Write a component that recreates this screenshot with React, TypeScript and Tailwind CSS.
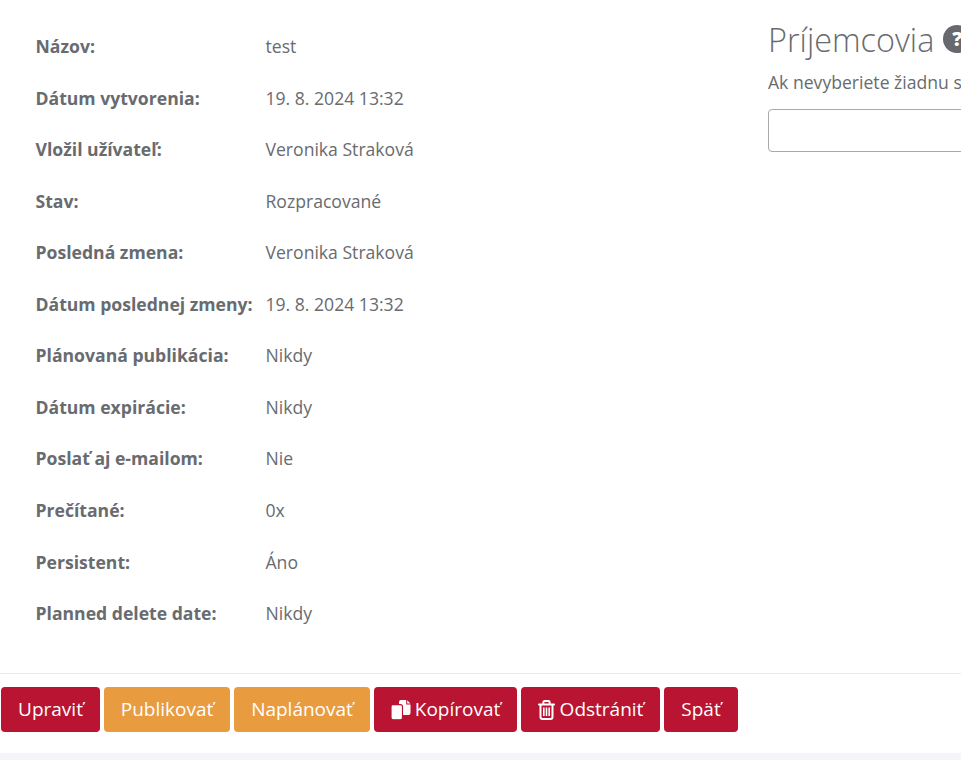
import React from "react";

const rows: [string, string][] = [
  ["Názov:", "test"],
  ["Dátum vytvorenia:", "19. 8. 2024 13:32"],
  ["Vložil užívateľ:", "Veronika Straková"],
  ["Stav:", "Rozpracované"],
  ["Posledná zmena:", "Veronika Straková"],
  ["Dátum poslednej zmeny:", "19. 8. 2024 13:32"],
  ["Plánovaná publikácia:", "Nikdy"],
  ["Dátum expirácie:", "Nikdy"],
  ["Poslať aj e-mailom:", "Nie"],
  ["Prečítané:", "0x"],
  ["Persistent:", "Áno"],
  ["Planned delete date:", "Nikdy"],
];

function CopyIcon() {
  return (
    <svg viewBox="0 0 20 20" className="w-[20px] h-[20px] mr-[4px] shrink-0">
      <path fill="#fff" d="M10 0h5.2v4.6h4.3V13a2 2 0 0 1-2 2H10a2 2 0 0 1-2-2V2a2 2 0 0 1 2-2z" />
      <path fill="#fff" d="M16.2 0.3l3.2 3.3h-3.2V0.3z" />
      <path fill="#fff" stroke="#b91431" strokeWidth="1.2" d="M2 4.6h7.5a2 2 0 0 1 2 2V17.8a2 2 0 0 1-2 2H2a2 2 0 0 1-2-2V6.6a2 2 0 0 1 2-2z" />
    </svg>
  );
}

function TrashIcon() {
  return (
    <svg viewBox="0 0 17 20" className="w-[17px] h-[20px] mr-[5px] shrink-0" fill="none" stroke="#fff">
      <path strokeWidth="2" strokeLinecap="round" d="M1 4.4h15" />
      <path strokeWidth="2" d="M5.3 4V2.4A1.4 1.4 0 0 1 6.7 1h3.6a1.4 1.4 0 0 1 1.4 1.4V4" />
      <path strokeWidth="2" d="M2.5 4.4V17A2 2 0 0 0 4.5 19h8a2 2 0 0 0 2-2V4.4" />
      <path strokeWidth="1.6" d="M5.8 7.5v8.5M8.5 7.5v8.5M11.2 7.5v8.5" />
    </svg>
  );
}

function Btn({ children, orange, className }: { children: React.ReactNode; orange?: boolean; className: string }) {
  return (
    <button
      className={
        "h-[45px] rounded-[4px] text-white flex items-center justify-center whitespace-nowrap text-[19px] " +
        (orange ? "bg-[#e99b40] " : "bg-[#b91431] ") +
        className
      }
    >
      {children}
    </button>
  );
}

export default function App() {
  return (
    <div className="w-[961px] h-[760px] overflow-hidden bg-white text-[#686b6f] font-['Open_Sans',sans-serif] flex flex-col">
      <div className="h-[673px] flex shrink-0">
        <div className="w-[768px] shrink-0 pl-[35.5px] pt-[20.5px]">
          {rows.map(([k, v]) => (
            <div key={k} className="flex h-[51.55px] items-center text-[17.6px]">
              <div className="w-[230px] shrink-0 font-bold whitespace-nowrap">{k}</div>
              <div className="whitespace-nowrap">{v}</div>
            </div>
          ))}
        </div>
        <div className="w-[400px] shrink-0">
          <div className="flex items-center mt-[15px] h-[48px]">
            <h2 className="text-[32.4px] font-light whitespace-nowrap">Príjemcovia</h2>
            <span className="ml-[9px] w-[28px] h-[28px] rounded-full bg-[#67696c] text-white flex items-center justify-center font-extrabold text-[20px] shrink-0">?</span>
          </div>
          <p className="mt-[7px] text-[17.6px] leading-[24px] whitespace-nowrap">Ak nevyberiete žiadnu s</p>
          <div className="mt-[15px] w-[400px] h-[43px] border border-[#aaaaaa] rounded-[4px]" />
        </div>
      </div>
      <div className="h-[80px] border-t border-[#e9ecef] pt-[13px] pl-[1px] flex items-start gap-[4px] shrink-0">
        <Btn className="w-[99px]">Upraviť</Btn>
        <Btn orange className="w-[126px]">Publikovať</Btn>
        <Btn orange className="w-[136px]">Naplánovať</Btn>
        <Btn className="w-[143px]"><CopyIcon />Kopírovať</Btn>
        <Btn className="w-[139px]"><TrashIcon />Odstrániť</Btn>
        <Btn className="w-[74px]">Späť</Btn>
      </div>
      <div className="flex-1 bg-[#f4f5fa]" />
    </div>
  );
}
